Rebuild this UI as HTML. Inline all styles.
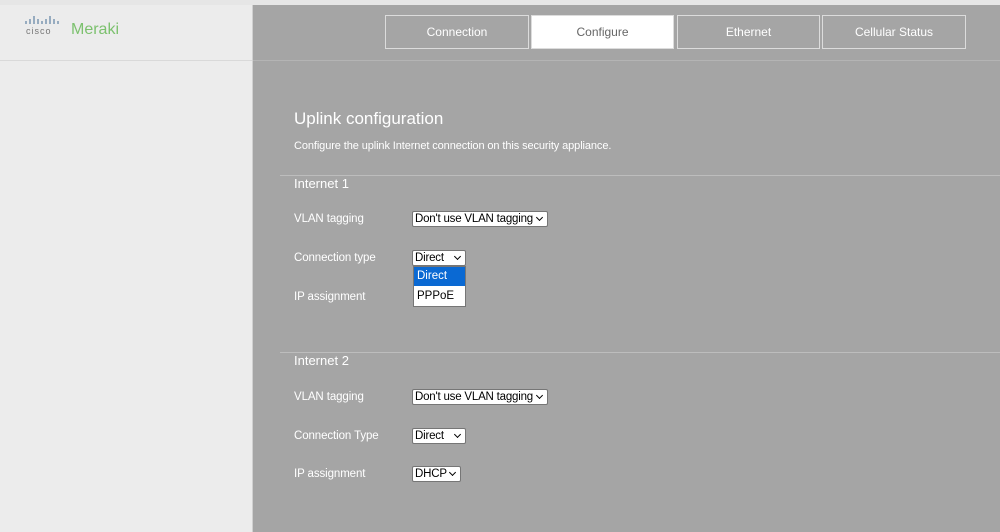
<!DOCTYPE html>
<html><head><style>
*{box-sizing:border-box;margin:0;padding:0}
body{width:1000px;height:532px;overflow:hidden;background:#a5a5a5;font-family:"Liberation Sans",Arial,sans-serif;position:relative}
.top{position:absolute;left:0;top:0;width:1000px;height:5px;background:#e6e6e6}
.side{position:absolute;left:0;top:5px;width:253px;height:527px;background:#ececec;border-right:1px solid #d0d0d0}
.side .hl{position:absolute;left:0;top:55px;width:252px;height:1px;background:#d9d9d9}
.main{position:absolute;left:253px;top:5px;right:0;bottom:0;background:#a5a5a5}
.hline{position:absolute;left:253px;top:60px;right:0;height:1px;background:#b4b4b4}
.tab{position:absolute;top:15px;height:34px;border:1px solid #dcdcdc;color:#fff;font-size:12px;text-align:center;line-height:32px}
.tab.act{background:#fff;color:#666}
.t{position:absolute;color:#fff;font-size:11.5px;letter-spacing:-0.1px}
.h{position:absolute;color:#fff}
.line{position:absolute;left:280px;right:0;height:1px;background:#bdbdbd}
.sel{position:absolute;background:#fff;border:1px solid #767676;border-radius:2px;font-size:11.5px;letter-spacing:-0.2px;color:#000;height:16px;line-height:14px;padding-left:2px;white-space:nowrap}
.sel:after{content:"";position:absolute;right:5px;top:3px;width:4px;height:4px;border-right:1.5px solid #000;border-bottom:1.5px solid #000;transform:rotate(45deg);background:#fff}
</style></head><body>
<div class="top"></div>
<div class="side"><div class="hl"></div>
<svg style="position:absolute;left:25px;top:11px" width="36" height="10"><g stroke="#6a8aa8" stroke-width="1.3"><line x1="1" y1="5" x2="1" y2="8"/><line x1="5" y1="3" x2="5" y2="8"/><line x1="9" y1="0" x2="9" y2="8"/><line x1="13" y1="3" x2="13" y2="8"/><line x1="17" y1="5" x2="17" y2="8"/><line x1="21" y1="3" x2="21" y2="8"/><line x1="25" y1="0" x2="25" y2="8"/><line x1="29" y1="3" x2="29" y2="8"/><line x1="33" y1="5" x2="33" y2="8"/></g></svg>
<div style="position:absolute;left:26px;top:21px;font-size:9px;color:#777;letter-spacing:1px">cisco</div>
<div style="position:absolute;left:71px;top:16px;font-size:16px;color:#7cc16e">Meraki</div>
</div>
<div class="main"></div>
<div class="hline"></div>
<div class="tab" style="left:385px;width:144px">Connection</div>
<div class="tab act" style="left:531px;width:143px">Configure</div>
<div class="tab" style="left:677px;width:143px">Ethernet</div>
<div class="tab" style="left:822px;width:144px">Cellular Status</div>
<div class="h" style="left:294px;top:109px;font-size:17px">Uplink configuration</div>
<div class="t" style="left:294px;top:140px;font-size:11px">Configure the uplink Internet connection on this security appliance.</div>
<div class="line" style="top:175px"></div>
<div class="h" style="left:294px;top:176px;font-size:13px">Internet 1</div>
<div class="t" style="left:294px;top:213px">VLAN tagging</div>
<div class="sel" style="left:412px;top:211px;width:136px">Don't use VLAN tagging</div>
<div class="t" style="left:294px;top:252px">Connection type</div>
<div class="sel" style="left:412px;top:250px;width:54px">Direct</div>
<div style="position:absolute;left:413px;top:266px;width:53px;height:41px;background:#fff;border:1px solid #767676;font-size:11.5px">
<div style="background:#0a69d3;color:#fff;height:19px;line-height:19px;padding-left:3px">Direct</div>
<div style="height:20px;line-height:20px;padding-left:3px">PPPoE</div></div>
<div class="t" style="left:294px;top:291px">IP assignment</div>
<div class="line" style="top:352px"></div>
<div class="h" style="left:294px;top:353px;font-size:13px">Internet 2</div>
<div class="t" style="left:294px;top:391px">VLAN tagging</div>
<div class="sel" style="left:412px;top:389px;width:136px">Don't use VLAN tagging</div>
<div class="t" style="left:294px;top:430px">Connection Type</div>
<div class="sel" style="left:412px;top:428px;width:54px">Direct</div>
<div class="t" style="left:294px;top:468px">IP assignment</div>
<div class="sel" style="left:412px;top:466px;width:49px">DHCP</div>
</body></html>
